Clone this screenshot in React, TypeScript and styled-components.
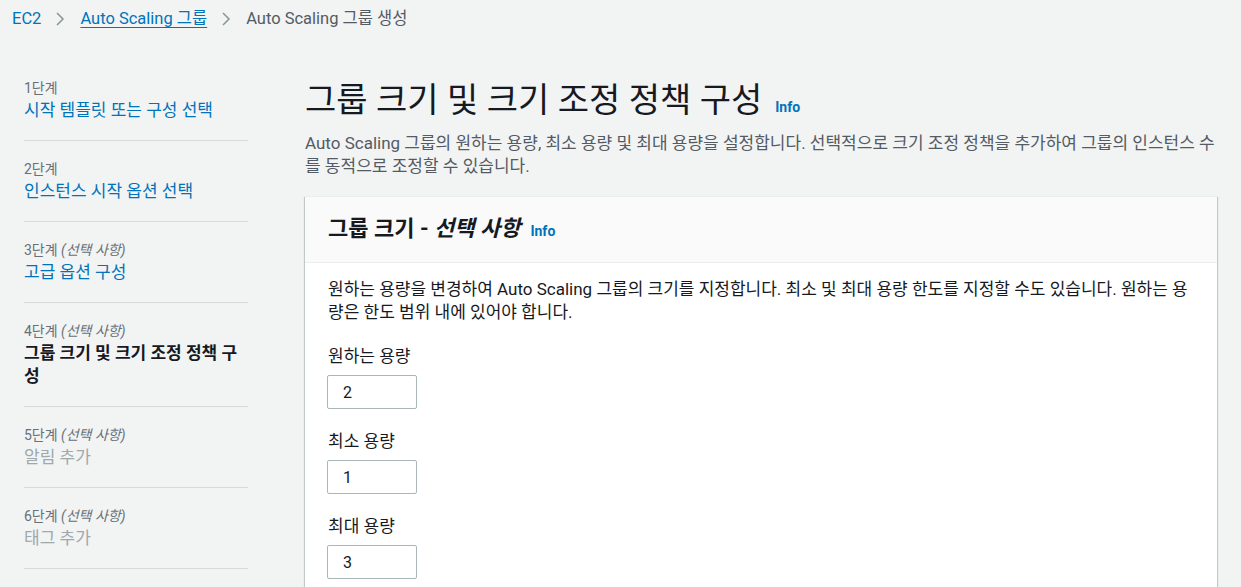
import React from "react";
import styled, { createGlobalStyle } from "styled-components";

const FONT = `Roboto, "Noto Sans CJK KR", sans-serif`;

const GlobalStyle = createGlobalStyle`
  html, body {
    margin: 0;
    padding: 0;
    background: #f2f3f3;
  }
  body {
    font-family: ${FONT};
    font-size: 14px;
    color: #16191f;
  }
  * {
    box-sizing: border-box;
  }
`;

const Page = styled.div`
  width: 1241px;
  height: 587px;
  overflow: hidden;
`;

const Breadcrumbs = styled.nav`
  display: flex;
  align-items: center;
  padding: 8px 12px;
  line-height: 22px;
  font-size: 16.5px;
`;

const Crumb = styled.a<{ $underline?: boolean }>`
  color: #0073bb;
  text-decoration: ${(p) => (p.$underline ? "underline" : "none")};
  text-underline-offset: 3px;
`;

const CurrentCrumb = styled.span`
  color: #545b64;
`;

const Chevron = styled.svg`
  width: 10px;
  height: 14px;
  margin: 0 15px 0 14px;
  flex-shrink: 0;
`;

const Layout = styled.div`
  display: grid;
  grid-template-columns: 224px 912px;
  column-gap: 57px;
  padding-left: 24px;
`;

const Sidebar = styled.ol`
  list-style: none;
  margin: 0;
  padding: 22px 0 0;
`;

const Step = styled.li`
  padding: 19px 0 18px;
  border-bottom: 1px solid #d5dbdb;
`;

const StepLabel = styled.div`
  font-size: 14px;
  line-height: 18px;
  color: #687078;

  em {
    font-style: italic;
  }
`;

const StepTitle = styled.div<{ $state: "link" | "active" | "disabled" }>`
  font-size: 17px;
  line-height: 23px;
  margin-top: 2px;
  color: ${(p) =>
    p.$state === "link" ? "#0073bb" : p.$state === "active" ? "#16191f" : "#9ea9ab"};
  font-weight: ${(p) => (p.$state === "active" ? 700 : 400)};
`;

const Main = styled.main`
  padding-top: 42px;
`;

const TitleRow = styled.div`
  display: flex;
  align-items: baseline;
  gap: 13px;
`;

const PageTitle = styled.h1`
  margin: 0;
  font-size: 34px;
  line-height: 40px;
  font-weight: 400;
  color: #16191f;
`;

const InfoLink = styled.a`
  color: #0073bb;
  font-size: 14px;
  font-weight: 700;
  text-decoration: none;
`;

const Description = styled.p`
  margin: 12px 0 0;
  font-size: 17px;
  line-height: 23px;
  color: #545b64;
`;

const Card = styled.section`
  margin-top: 18px;
  background: #ffffff;
  border-top: 1px solid #eaeded;
  box-shadow: 0 1px 1px 0 rgba(0, 28, 36, 0.3), 1px 1px 1px 0 rgba(0, 28, 36, 0.15),
    -1px 1px 1px 0 rgba(0, 28, 36, 0.15);
`;

const CardHeader = styled.header`
  display: flex;
  align-items: baseline;
  gap: 10px;
  padding: 18px 23px 19px;
  background: #fafafa;
  border-bottom: 1px solid #eaeded;
`;

const CardTitle = styled.h2`
  margin: 0;
  font-size: 22px;
  line-height: 28px;
  font-weight: 700;

  em {
    font-style: italic;
  }
`;

const CardBody = styled.div`
  padding: 15px 23px 20px;
`;

const BodyText = styled.p`
  margin: 0 0 21px;
  font-size: 17px;
  line-height: 23px;
  color: #16191f;
`;

const Field = styled.div`
  margin-bottom: 21px;
`;

const FieldLabel = styled.label`
  display: block;
  font-size: 17px;
  line-height: 22px;
  margin-bottom: 8px;
`;

const NumberInput = styled.input`
  display: block;
  width: 90px;
  height: 34px;
  margin-left: -1px;
  padding: 0 15px;
  border: 1px solid #aab7b8;
  border-radius: 2px;
  background: #ffffff;
  font-family: ${FONT};
  font-size: 16px;
  color: #16191f;
  outline: none;
`;

const ChevronIcon = () => (
  <Chevron viewBox="0 0 10 14">
    <polyline points="2,1 8,7 2,13" fill="none" stroke="#879596" strokeWidth="1.5" />
  </Chevron>
);

const steps = [
  { num: "1단계", optional: false, title: "시작 템플릿 또는 구성 선택", state: "link" as const },
  { num: "2단계", optional: false, title: "인스턴스 시작 옵션 선택", state: "link" as const },
  { num: "3단계", optional: true, title: "고급 옵션 구성", state: "link" as const },
  { num: "4단계", optional: true, title: "그룹 크기 및 크기 조정 정책 구성", state: "active" as const },
  { num: "5단계", optional: true, title: "알림 추가", state: "disabled" as const },
  { num: "6단계", optional: true, title: "태그 추가", state: "disabled" as const },
];

const fields = [
  { label: "원하는 용량", value: "2" },
  { label: "최소 용량", value: "1" },
  { label: "최대 용량", value: "3" },
];

export default function App() {
  return (
    <Page>
      <GlobalStyle />
      <Breadcrumbs>
        <Crumb href="#">EC2</Crumb>
        <ChevronIcon />
        <Crumb href="#" $underline>
          Auto Scaling 그룹
        </Crumb>
        <ChevronIcon />
        <CurrentCrumb>Auto Scaling 그룹 생성</CurrentCrumb>
      </Breadcrumbs>
      <Layout>
        <Sidebar>
          {steps.map((s) => (
            <Step key={s.num}>
              <StepLabel>
                {s.num}
                {s.optional && <em> (선택 사항)</em>}
              </StepLabel>
              <StepTitle $state={s.state}>{s.title}</StepTitle>
            </Step>
          ))}
        </Sidebar>
        <Main>
          <TitleRow>
            <PageTitle>그룹 크기 및 크기 조정 정책 구성</PageTitle>
            <InfoLink href="#">Info</InfoLink>
          </TitleRow>
          <Description>
            Auto Scaling 그룹의 원하는 용량, 최소 용량 및 최대 용량을 설정합니다. 선택적으로 크기 조정
            정책을 추가하여 그룹의 인스턴스 수를 동적으로 조정할 수 있습니다.
          </Description>
          <Card>
            <CardHeader>
              <CardTitle>
                그룹 크기 - <em>선택 사항</em>
              </CardTitle>
              <InfoLink href="#">Info</InfoLink>
            </CardHeader>
            <CardBody>
              <BodyText>
                원하는 용량을 변경하여 Auto Scaling 그룹의 크기를 지정합니다. 최소 및 최대 용량 한도를
                지정할 수도 있습니다. 원하는 용량은 한도 범위 내에 있어야 합니다.
              </BodyText>
              {fields.map((f) => (
                <Field key={f.label}>
                  <FieldLabel>{f.label}</FieldLabel>
                  <NumberInput type="text" defaultValue={f.value} readOnly />
                </Field>
              ))}
            </CardBody>
          </Card>
        </Main>
      </Layout>
    </Page>
  );
}
